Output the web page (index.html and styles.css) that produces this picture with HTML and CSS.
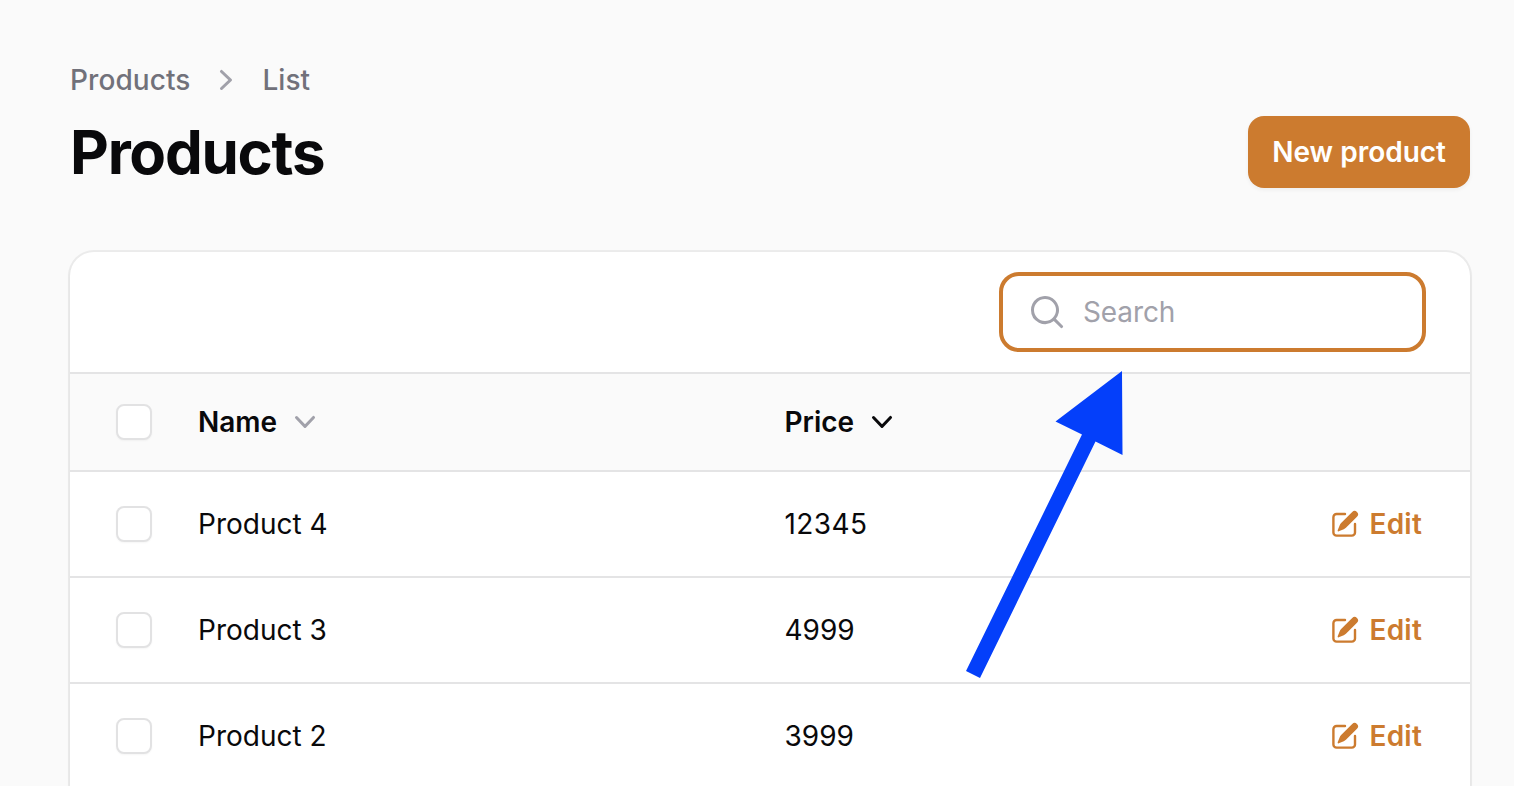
FILE: index.html
```html
<!DOCTYPE html>
<html lang="en">
<head>
<meta charset="utf-8">
<title>Products</title>
<link rel="stylesheet" href="styles.css">
</head>
<body>
<svg class="defs" aria-hidden="true">
  <symbol id="pencil" viewBox="0 0 20 20"><path d="M5.433 13.917l1.262-3.155A4 4 0 017.58 9.42l6.92-6.918a2.121 2.121 0 013 3l-6.92 6.918c-.383.383-.84.685-1.343.886l-3.154 1.262a.5.5 0 01-.65-.65z"/><path d="M3.5 5.75c0-.69.56-1.25 1.25-1.25H10A.75.75 0 0010 3H4.75A2.75 2.75 0 002 5.75v9.5A2.75 2.75 0 004.75 18h9.5A2.75 2.75 0 0017 15.25V10a.75.75 0 00-1.5 0v5.25c0 .69-.56 1.25-1.25 1.25h-9.5c-.69 0-1.25-.56-1.25-1.25v-9.5z"/></symbol>
  <symbol id="down" viewBox="0 0 20 20"><path fill-rule="evenodd" d="M5.23 7.21a.75.75 0 011.06.02L10 11.168l3.71-3.938a.75.75 0 111.08 1.04l-4.25 4.5a.75.75 0 01-1.08 0l-4.25-4.5a.75.75 0 01.02-1.06z"/></symbol>
  <symbol id="right" viewBox="0 0 20 20"><path fill-rule="evenodd" d="M7.21 14.77a.75.75 0 01.02-1.06L11.168 10 7.23 6.29a.75.75 0 111.04-1.08l4.5 4.25a.75.75 0 010 1.08l-4.5 4.25a.75.75 0 01-1.06-.02z"/></symbol>
  <symbol id="search" viewBox="0 0 20 20"><path fill-rule="evenodd" d="M9 3.5a5.5 5.5 0 100 11 5.5 5.5 0 000-11zM2 9a7 7 0 1112.452 4.391l3.328 3.329a.75.75 0 11-1.06 1.06l-3.329-3.328A7 7 0 012 9z"/></symbol>
</svg>
<main class="page">
  <header class="header">
    <div>
      <nav class="breadcrumbs">
        <a>Products</a>
        <svg class="icon muted"><use href="#right"/></svg>
        <a>List</a>
      </nav>
      <h1 class="title">Products</h1>
    </div>
    <button class="button">New product</button>
  </header>
  <section class="card">
    <div class="toolbar">
      <label class="search">
        <svg class="icon muted"><use href="#search"/></svg>
        <input class="search-input" type="text" placeholder="Search">
      </label>
    </div>
    <div class="row head">
      <span class="checkbox"></span>
      <span class="sort">Name <svg class="icon muted"><use href="#down"/></svg></span>
      <span class="sort">Price <svg class="icon"><use href="#down"/></svg></span>
    </div>
    <div class="row">
      <span class="checkbox"></span><span>Product 4</span><span class="price">12345</span>
      <a class="edit"><svg class="icon-sm"><use href="#pencil"/></svg>Edit</a>
    </div>
    <div class="row">
      <span class="checkbox"></span><span>Product 3</span><span>4999</span>
      <a class="edit"><svg class="icon-sm"><use href="#pencil"/></svg>Edit</a>
    </div>
    <div class="row last">
      <span class="checkbox"></span><span>Product 2</span><span>3999</span>
      <a class="edit"><svg class="icon-sm"><use href="#pencil"/></svg>Edit</a>
    </div>
  </section>
</main>
<svg class="arrow" viewBox="0 0 158 308"><path d="M156 0L156.500 84L129.500 70.500L14 307L0 300L116 63.500L89.500 50.500Z"/></svg>
</body>
</html>
```
FILE: styles.css
```css
* { box-sizing: border-box; }
body {
  margin: 0;
  height: 786px;
  overflow: hidden;
  position: relative;
  background: #fafafa;
  color: #09090b;
  font: 400 28px/40px Inter, "Liberation Sans", sans-serif;
}
svg { fill: currentColor; flex: none; display: block; }
.defs { display: none; }
.icon { width: 40px; height: 40px; }
.icon-sm { width: 32px; height: 32px; }
.muted { color: #a1a1aa; }
.page { padding: 60px 44px 0 70px; }
.header { display: flex; justify-content: space-between; align-items: center; }
.breadcrumbs {
  display: flex;
  align-items: center;
  gap: 16px;
  font-weight: 500;
  letter-spacing: 0.07px;
  color: #71717a;
}
.title {
  margin: 16px 0 0;
  font-size: 60px;
  line-height: 72px;
  font-weight: 700;
  letter-spacing: -1.25px;
}
.button {
  margin-top: 56px;
  align-self: flex-start;
  height: 72px;
  padding: 0 24px;
  border: 0;
  border-radius: 16px;
  background: #cc7b2f;
  color: #fff;
  font: 600 28px/40px Inter, "Liberation Sans", sans-serif;
  box-shadow: 0 2px 4px rgb(0 0 0 / 5%);
}
.card {
  margin-top: 64px;
  background: #fff;
  border-radius: 24px 24px 0 0;
  box-shadow: 0 0 0 2px rgb(9 9 11 / 6%), 0 2px 4px rgb(0 0 0 / 5%);
  height: 534px;
  overflow: hidden;
}
.toolbar {
  height: 120px;
  padding: 20px 44px;
  display: flex;
  justify-content: flex-end;
}
.search {
  display: flex;
  align-items: center;
  gap: 16px;
  width: 427px;
  height: 80px;
  padding: 0 24px;
  border: 4px solid #cc7b2f;
  border-radius: 20px;
}
.search-input {
  border: 0;
  outline: 0;
  padding: 0;
  min-width: 0;
  flex: 1;
  background: none;
  font: inherit;
  letter-spacing: -0.1px;
}
.search-input::placeholder { color: #a1a1aa; opacity: 1; }
.row {
  display: grid;
  grid-template-columns: 82px 586.5px 1fr auto;
  align-items: center;
  height: 106px;
  padding: 0 48px 0 46px;
  border-top: 2px solid #e4e4e5;
}
.last { height: 104px; padding-top: 2px; }
.head { height: 98px; background: #fafafa; font-weight: 600; }
.sort { display: flex; align-items: center; gap: 8px; }
.price { letter-spacing: 0.4px; }
.checkbox {
  width: 36px;
  height: 36px;
  border: 2px solid #e2e2e3;
  border-radius: 8px;
  background: #fff;
  box-shadow: 0 1px 2px rgb(0 0 0 / 4%);
}
.edit {
  display: flex;
  align-items: center;
  gap: 9px;
  color: #cc7b2f;
  font-weight: 600;
  letter-spacing: 0.2px;
}
.arrow {
  position: absolute;
  left: 966px;
  top: 371px;
  width: 158px;
  height: 308px;
  color: #043ffa;
}
```
